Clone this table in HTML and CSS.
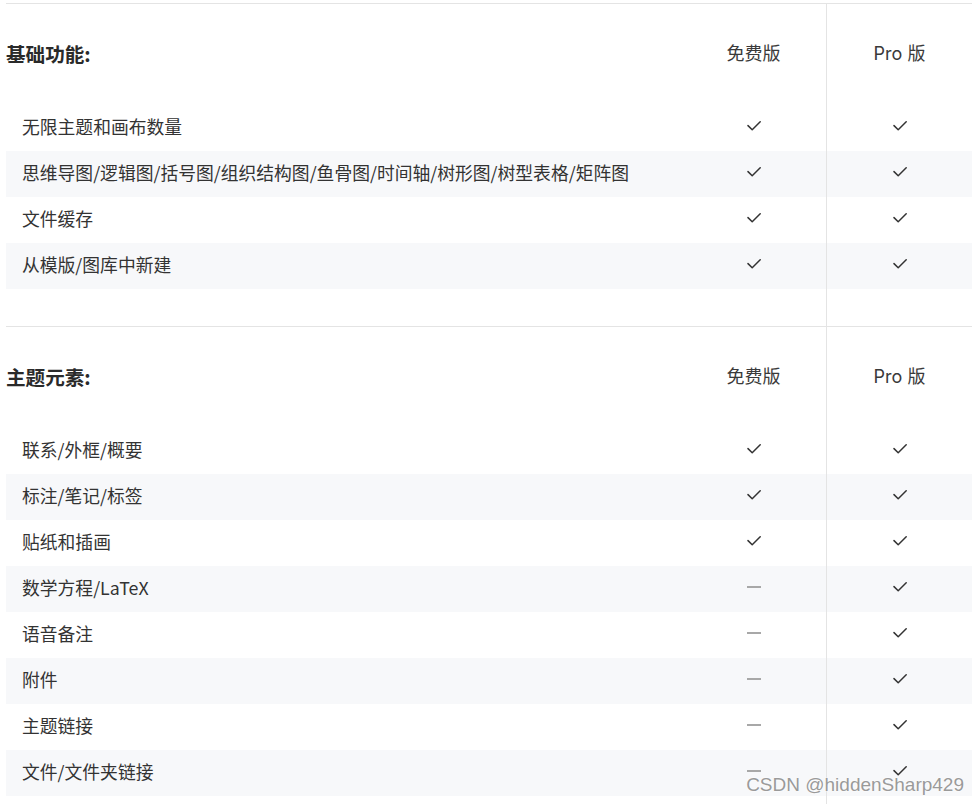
FILE: index.html
```html
<!DOCTYPE html>
<html lang="zh-CN">
<head>
<meta charset="utf-8">
<title>功能对比</title>
<link rel="stylesheet" href="styles.css">
</head>
<body>
<div class="table">
  <section class="group">
    <div class="row head"><div class="label">基础功能:</div><div class="col">免费版</div><div class="col pro">Pro 版</div></div>
    <div class="row"><div class="label">无限主题和画布数量</div><div class="col"><svg class="ok" viewBox="0 0 14 10"><path d="M1 4.6 L5.2 8.8 L13.2 0.8"/></svg></div><div class="col pro"><svg class="ok" viewBox="0 0 14 10"><path d="M1 4.6 L5.2 8.8 L13.2 0.8"/></svg></div></div>
    <div class="row alt"><div class="label">思维导图/逻辑图/括号图/组织结构图/鱼骨图/时间轴/树形图/树型表格/矩阵图</div><div class="col"><svg class="ok" viewBox="0 0 14 10"><path d="M1 4.6 L5.2 8.8 L13.2 0.8"/></svg></div><div class="col pro"><svg class="ok" viewBox="0 0 14 10"><path d="M1 4.6 L5.2 8.8 L13.2 0.8"/></svg></div></div>
    <div class="row"><div class="label">文件缓存</div><div class="col"><svg class="ok" viewBox="0 0 14 10"><path d="M1 4.6 L5.2 8.8 L13.2 0.8"/></svg></div><div class="col pro"><svg class="ok" viewBox="0 0 14 10"><path d="M1 4.6 L5.2 8.8 L13.2 0.8"/></svg></div></div>
    <div class="row alt"><div class="label">从模版/图库中新建</div><div class="col"><svg class="ok" viewBox="0 0 14 10"><path d="M1 4.6 L5.2 8.8 L13.2 0.8"/></svg></div><div class="col pro"><svg class="ok" viewBox="0 0 14 10"><path d="M1 4.6 L5.2 8.8 L13.2 0.8"/></svg></div></div>
    <div class="row spacer"><div class="label"></div><div class="col"></div><div class="col pro"></div></div>
  </section>
  <section class="group">
    <div class="row head"><div class="label">主题元素:</div><div class="col">免费版</div><div class="col pro">Pro 版</div></div>
    <div class="row"><div class="label">联系/外框/概要</div><div class="col"><svg class="ok" viewBox="0 0 14 10"><path d="M1 4.6 L5.2 8.8 L13.2 0.8"/></svg></div><div class="col pro"><svg class="ok" viewBox="0 0 14 10"><path d="M1 4.6 L5.2 8.8 L13.2 0.8"/></svg></div></div>
    <div class="row alt"><div class="label">标注/笔记/标签</div><div class="col"><svg class="ok" viewBox="0 0 14 10"><path d="M1 4.6 L5.2 8.8 L13.2 0.8"/></svg></div><div class="col pro"><svg class="ok" viewBox="0 0 14 10"><path d="M1 4.6 L5.2 8.8 L13.2 0.8"/></svg></div></div>
    <div class="row"><div class="label">贴纸和插画</div><div class="col"><svg class="ok" viewBox="0 0 14 10"><path d="M1 4.6 L5.2 8.8 L13.2 0.8"/></svg></div><div class="col pro"><svg class="ok" viewBox="0 0 14 10"><path d="M1 4.6 L5.2 8.8 L13.2 0.8"/></svg></div></div>
    <div class="row alt"><div class="label">数学方程/LaTeX</div><div class="col"><span class="no"></span></div><div class="col pro"><svg class="ok" viewBox="0 0 14 10"><path d="M1 4.6 L5.2 8.8 L13.2 0.8"/></svg></div></div>
    <div class="row"><div class="label">语音备注</div><div class="col"><span class="no"></span></div><div class="col pro"><svg class="ok" viewBox="0 0 14 10"><path d="M1 4.6 L5.2 8.8 L13.2 0.8"/></svg></div></div>
    <div class="row alt"><div class="label">附件</div><div class="col"><span class="no"></span></div><div class="col pro"><svg class="ok" viewBox="0 0 14 10"><path d="M1 4.6 L5.2 8.8 L13.2 0.8"/></svg></div></div>
    <div class="row"><div class="label">主题链接</div><div class="col"><span class="no"></span></div><div class="col pro"><svg class="ok" viewBox="0 0 14 10"><path d="M1 4.6 L5.2 8.8 L13.2 0.8"/></svg></div></div>
    <div class="row alt"><div class="label">文件/文件夹链接</div><div class="col"><span class="no"></span></div><div class="col pro"><svg class="ok" viewBox="0 0 14 10"><path d="M1 4.6 L5.2 8.8 L13.2 0.8"/></svg></div></div>
    <div class="row spacer"><div class="label"></div><div class="col"></div><div class="col pro"></div></div>
  </section>
</div>
<div class="watermark">CSDN @hiddenSharp429</div>
</body>
</html>
```
FILE: styles.css
```css
html, body {
  margin: 0;
  background: #fff;
}
body {
  padding: 3px 8px 0 6px;
  font-family: "Noto Sans CJK SC", "Noto Sans", sans-serif;
  color: #333;
  overflow: hidden;
  height: 804px;
  box-sizing: border-box;
}
.table {
  width: 966px;
}
.group {
  border-top: 1px solid #e4e4e4;
}
.row {
  display: grid;
  grid-template-columns: 675px 145px 146px;
  height: 46px;
  align-items: stretch;
}
.row.alt {
  background: #f7f8fa;
}
.row.head {
  height: 101px;
}
.row.spacer {
  height: 37px;
}
.label {
  display: flex;
  align-items: center;
  padding: 0 0 2px 16px;
  font-size: 17.8px;
  line-height: 1;
  white-space: nowrap;
}
.head .label {
  padding-left: 0;
  font-size: 19.6px;
  font-weight: 700;
  color: #2a2a2a;
}
.col {
  display: flex;
  align-items: center;
  justify-content: center;
  font-size: 18px;
  line-height: 1;
  padding-bottom: 4px;
}
.head .col {
  color: #3a3a3a;
  font-family: "Inter", "Noto Sans CJK SC", sans-serif;
  font-size: 18px;
  padding-bottom: 2px;
}
.col.pro {
  border-left: 1px solid #e4e4e4;
}
.ok {
  width: 14px;
  height: 10px;
  fill: none;
  stroke: #333;
  stroke-width: 1.5;
  stroke-linecap: round;
  stroke-linejoin: round;
}
.no {
  display: block;
  width: 14px;
  height: 1.5px;
  background: #a8a8a8;
}
.watermark {
  position: absolute;
  right: 16px;
  bottom: 10px;
  font-family: "Liberation Sans", Arial, sans-serif;
  font-size: 19px;
  color: #9a9a9a;
  text-shadow: 0 0 2px #fff, 0 0 2px #fff;
  line-height: 1;
}
```
